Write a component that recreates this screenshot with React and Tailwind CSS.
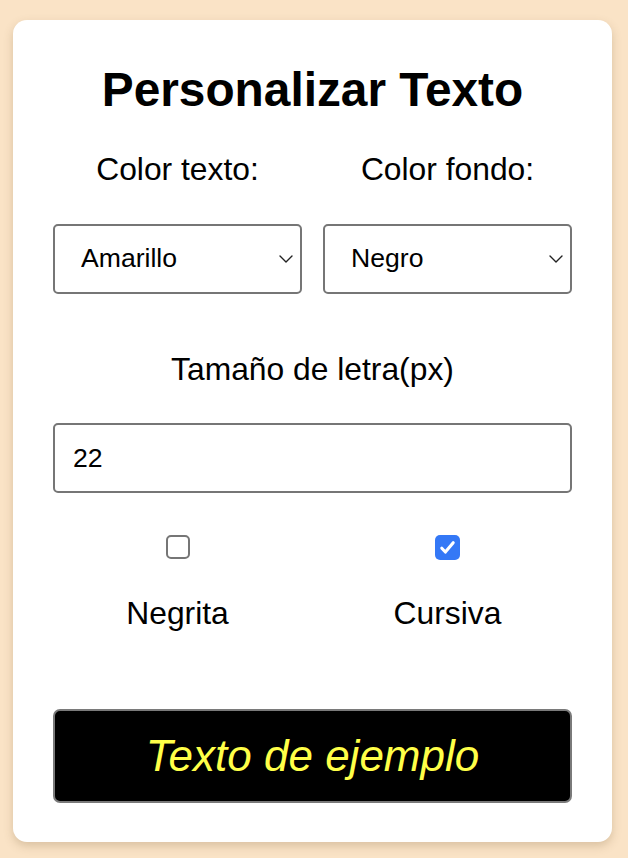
import React from "react";

const Chevron = () => (
  <svg className="pointer-events-none absolute right-[9px] top-1/2 -translate-y-1/2 w-[14px] h-[9px]" viewBox="0 0 14 9" fill="none">
    <path d="M1 1.5l6 6 6-6" stroke="#222" strokeWidth="1.4" strokeLinecap="round" strokeLinejoin="round" />
  </svg>
);

const SelectBox = ({ value, options }) => (
  <div className="relative">
    <select
      defaultValue={value}
      className="appearance-none w-full h-[70px] pl-[26px] pr-8 bg-white border-2 border-[#767676] rounded-[5px] text-[26.6px] text-black outline-none"
    >
      {options.map((o) => (
        <option key={o}>{o}</option>
      ))}
    </select>
    <Chevron />
  </div>
);

const App = () => {
  const colores = ["Amarillo", "Negro", "Blanco", "Rojo", "Azul", "Verde"];

  return (
    <div
      className="min-h-[858px] bg-[#fae3c6] pt-[20px] pb-[16px]"
      style={{ fontFamily: "'Liberation Sans', Arial, sans-serif" }}
    >
      <div className="ml-[13px] w-[599px] h-[822px] bg-white rounded-[14px] shadow-[0_4px_10px_rgba(120,90,50,0.25)] px-[40px] pt-[43px]">
        <h1 className="text-center text-[47.8px] leading-[54px] font-bold text-black">
          Personalizar Texto
        </h1>

        <div className="grid grid-cols-2 gap-x-[21px] mt-[34px]">
          <label className="text-center text-[31.8px] leading-[37px] text-black">Color texto:</label>
          <label className="text-center text-[31.8px] leading-[37px] text-black">Color fondo:</label>
          <div className="mt-[36px]">
            <SelectBox value="Amarillo" options={colores} />
          </div>
          <div className="mt-[36px]">
            <SelectBox value="Negro" options={["Negro", "Blanco", "Amarillo", "Gris"]} />
          </div>
        </div>

        <p className="mt-[57px] text-center text-[31.8px] leading-[37px] text-black">
          Tamaño de letra(px)
        </p>

        <input
          type="number"
          defaultValue={22}
          className="block mt-[35px] w-full h-[70px] px-[18px] border-2 border-[#767676] rounded-[5px] text-[26.6px] text-black outline-none"
        />

        <div className="grid grid-cols-2 gap-x-[21px] mt-[42px]">
          <div className="flex flex-col items-center">
            <span className="w-[24px] h-[24px] rounded-[5px] border-2 border-[#767676] bg-white" />
            <span className="mt-[36px] text-[31.8px] leading-[37px] text-black">Negrita</span>
          </div>
          <div className="flex flex-col items-center">
            <span className="w-[25px] h-[25px] rounded-[5px] bg-[#3478f6] flex items-center justify-center">
              <svg className="w-[19px] h-[19px]" viewBox="0 0 16 16" fill="none">
                <path d="M3.2 8.6l3 3.2L12.8 4" stroke="#fff" strokeWidth="2.6" strokeLinecap="round" strokeLinejoin="round" />
              </svg>
            </span>
            <span className="mt-[35px] text-[31.8px] leading-[37px] text-black">Cursiva</span>
          </div>
        </div>

        <div className="mt-[77px] h-[94px] bg-black border-2 border-[#7a7a7a] rounded-[7px] flex items-center justify-center">
          <span className="italic text-[44px] leading-[50px] text-[#ffff48]">Texto de ejemplo</span>
        </div>
      </div>
    </div>
  );
};

export default App;
